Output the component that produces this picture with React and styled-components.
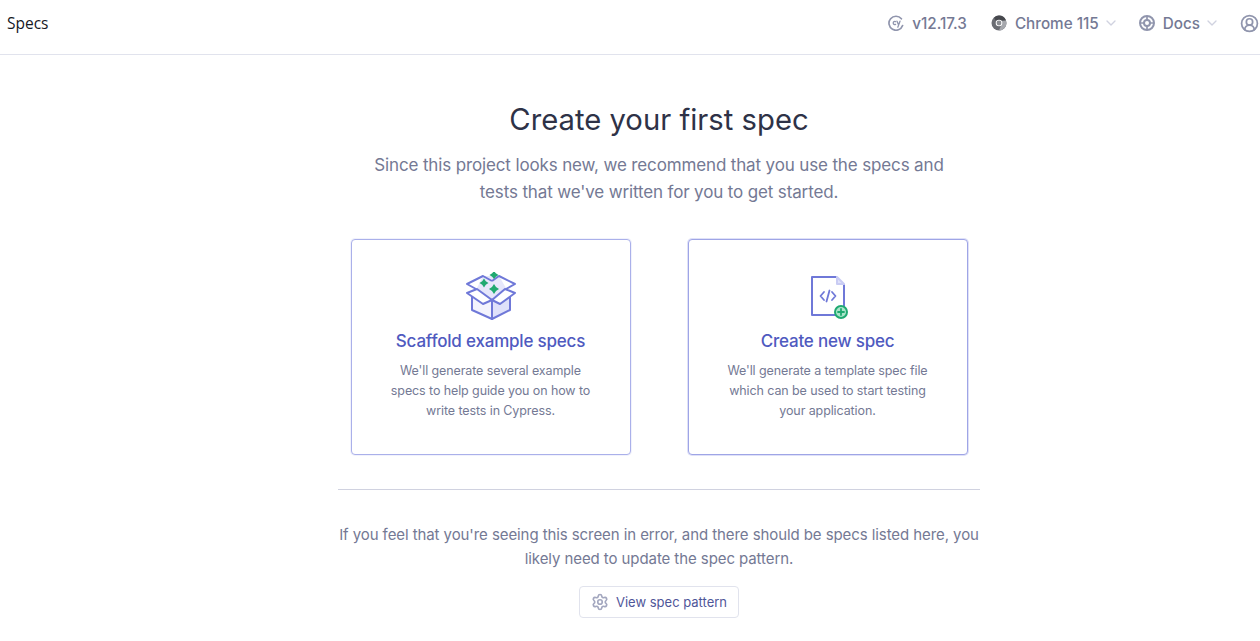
import styled, { createGlobalStyle } from 'styled-components';
import { ChevronDown, CircleUserRound, Settings } from 'lucide-react';

const GlobalStyle = createGlobalStyle`
  html, body {
    margin: 0;
    background: #fff;
    font-family: 'Inter', 'Liberation Sans', sans-serif;
  }
  * {
    box-sizing: border-box;
  }
`;

const Page = styled.div`
  width: 1260px;
  height: 641px;
  overflow: hidden;
`;

const TopBar = styled.header`
  height: 55px;
  border-bottom: 1px solid #e1e3ed;
  display: flex;
  align-items: center;
  justify-content: space-between;
  padding: 0 1px 8px 7px;
`;

const Crumb = styled.div`
  font-family: 'Open Sans', sans-serif;
  font-size: 15.5px;
  color: #16181f;
`;

const TopActions = styled.div`
  display: flex;
  align-items: center;
  gap: 20px;
`;

const TopItem = styled.div`
  display: flex;
  align-items: center;
  gap: 8px;
  margin-right: ${(p) => p.$mr || 0}px;
  font-size: 15.25px;
  font-weight: 500;
  color: #747994;
  svg {
    flex: none;
  }
`;

const Caret = styled(ChevronDown)`
  color: #d0d2e0;
  margin-left: -4px;
`;

const UserIcon = styled(CircleUserRound)`
  color: #9095ad;
  flex: none;
`;

// the content column is centred on a page slightly wider than the window
const Main = styled.main`
  display: flex;
  flex-direction: column;
  align-items: center;
  padding-left: 58px;
`;

const Title = styled.h1`
  margin: 45px 0 0;
  font-size: 29.25px;
  line-height: 40px;
  font-weight: 400;
  color: #2e3247;
`;

const Lead = styled.p`
  margin: 12px 0 0;
  width: 590px;
  text-align: center;
  font-size: 17px;
  letter-spacing: -0.14px;
  line-height: 27px;
  color: #747994;
`;

const Cards = styled.div`
  margin-top: 33px;
  display: flex;
  gap: 57px;
`;

const Card = styled.button`
  width: 280px;
  height: 216px;
  padding: 32px 0 0;
  background: #fff;
  border: 1px solid ${(p) => (p.$active ? '#9fa5e6' : '#aab0ea')};
  border-radius: 4px;
  box-shadow: ${(p) => (p.$active ? '0 0 0 1px #dfe1f8' : '0 0 0 1px #f1f2fc')};
  display: flex;
  flex-direction: column;
  align-items: center;
  font-family: inherit;
`;

const IconSlot = styled.div`
  height: 48px;
  display: flex;
  align-items: center;
  justify-content: center;
`;

const CardTitle = styled.div`
  margin-top: 7px;
  font-size: 17px;
  letter-spacing: -0.2px;
  line-height: 28px;
  font-weight: 500;
  color: #4f5abf;
`;

const CardText = styled.div`
  margin-top: 6px;
  width: 208px;
  font-size: 12.5px;
  letter-spacing: -0.1px;
  line-height: 20px;
  color: #747994;
`;

const Divider = styled.hr`
  width: 642px;
  margin: 34px 0 0;
  border: 0;
  border-top: 1px solid #d0d2e0;
`;

const Note = styled.p`
  margin: 33px 0 0;
  width: 650px;
  text-align: center;
  font-size: 15px;
  letter-spacing: -0.08px;
  line-height: 24px;
  color: #747994;
`;

const PatternButton = styled.button`
  margin-top: 15px;
  width: 160px;
  height: 32px;
  display: flex;
  align-items: center;
  justify-content: center;
  gap: 7px;
  background: #fff;
  border: 1px solid #e1e3ed;
  border-radius: 4px;
  font-family: inherit;
  font-size: 13px;
  color: #4f5699;
  svg {
    color: #a3a7bf;
  }
`;

const CypressIcon = () => (
  <svg width="16" height="16" viewBox="0 0 16 16" fill="none" stroke="#9095ad" strokeWidth="1.7" strokeLinecap="round">
    <path d="M13.4 3.8A7 7 0 1 0 14.6 10.5" />
    <path d="M7.6 6.6a1.6 1.6 0 1 0 0 2.8" strokeWidth="1.3" />
    <path d="M9 6.2l1.5 3.6M12 6.2l-2.2 6" strokeWidth="1.3" />
  </svg>
);

const ChromeIcon = () => (
  <svg width="16" height="16" viewBox="0 0 16 16">
    <circle cx="8" cy="8" r="7.5" fill="#6b6d73" />
    <path d="M8 .5A7.5 7.5 0 0 1 15 5.500H8A2.600 2.600 0 0 0 5.600 7L3 2.700A7.500 7.500 0 0 1 8 .5Z" fill="#46484d" />
    <path d="M15 5.500A7.500 7.500 0 0 1 8 15.500L10.400 9.400A2.600 2.600 0 0 0 10.200 6Z" fill="#a6a8ad" />
    <circle cx="8" cy="8" r="3.300" fill="#fff" />
    <circle cx="8" cy="8" r="2.400" fill="#8b8d92" />
  </svg>
);

const DocsIcon = () => (
  <svg width="16" height="16" viewBox="0 0 16 16" fill="none" stroke="#9095ad" strokeWidth="2">
    <circle cx="8" cy="8" r="7" />
    <circle cx="8" cy="8" r="3" />
    <path d="M8 1V5M8 11V15M1 8H5M11 8H15" strokeWidth="1.700" />
  </svg>
);

const BoxIcon = () => (
  <svg width="50" height="48" viewBox="26 12 50 48" fill="none" stroke="#6f78d8" strokeWidth="2" strokeLinejoin="round">
    <path d="M37 28L43 16L59 16L66 28L52 40Z" fill="#e6e7fb" stroke="none" />
    <path d="M32 34V50L52 59V40Z" fill="#f3f3fd" />
    <path d="M70 34V50L52 59V40Z" fill="#dfe1fa" />
    <path d="M36 29L27 24L43 16L52 21" />
    <path d="M66 29L75 24L59 16L52 21" />
    <path d="M37 29L27 33L43 44L52 40Z" fill="#fff" />
    <path d="M65 29L75 33L60 44L52 40Z" fill="#fff" />
    <g fill="#1fa971" stroke="none">
      <path d="M54 11L55.800 13.200L58.500 15L55.800 16.800L54 19L52.200 16.800L49.500 15L52.200 13.200Z" />
      <path d="M44 18.500L45.800 21.200L48.500 23L45.800 24.800L44 27.500L42.200 24.800L39.500 23L42.200 21.200Z" />
      <path d="M54 24L56 27L59 29L56 31L54 34L52 31L49 29L52 27Z" />
    </g>
  </svg>
);

const FileIcon = () => (
  <svg width="42" height="48" viewBox="17 7 42 48" fill="none" stroke="#6f78d8" strokeWidth="2" strokeLinejoin="round" strokeLinecap="round">
    <path d="M46 12H22V50H46" />
    <path d="M54 20V41" />
    <path d="M47 12L54 19H47Z" fill="#dfe1fa" stroke="#c9ccf3" />
    <path d="M34 27L30.500 31L34 35M42 27L45.500 31L42 35M39.500 25.500L36.500 36.500" strokeWidth="1.800" />
    <circle cx="51" cy="47" r="6" fill="#a9e5c9" stroke="#1fa971" strokeWidth="2" />
    <path d="M51 44V50M48 47H54" stroke="#1fa971" strokeWidth="1.800" />
  </svg>
);

export default function App() {
  return (
    <Page>
      <GlobalStyle />
      <TopBar>
        <Crumb>Specs</Crumb>
        <TopActions>
          <TopItem $mr={4}>
            <CypressIcon />
            v12.17.3
          </TopItem>
          <TopItem>
            <ChromeIcon />
            Chrome 115
            <Caret size={16} />
          </TopItem>
          <TopItem>
            <DocsIcon />
            Docs
            <Caret size={16} />
          </TopItem>
          <UserIcon size={19} strokeWidth={2.200} />
        </TopActions>
      </TopBar>
      <Main>
        <Title>Create your first spec</Title>
        <Lead>
          Since this project looks new, we recommend that you use the specs and tests that we've written for you to get started.
        </Lead>
        <Cards>
          <Card>
            <IconSlot>
              <BoxIcon />
            </IconSlot>
            <CardTitle>Scaffold example specs</CardTitle>
            <CardText>We'll generate several example specs to help guide you on how to write tests in Cypress.</CardText>
          </Card>
          <Card $active>
            <IconSlot>
              <FileIcon />
            </IconSlot>
            <CardTitle>Create new spec</CardTitle>
            <CardText>We'll generate a template spec file which can be used to start testing your application.</CardText>
          </Card>
        </Cards>
        <Divider />
        <Note>
          If you feel that you're seeing this screen in error, and there should be specs listed here, you likely need to update the spec pattern.
        </Note>
        <PatternButton>
          <Settings size={18} strokeWidth={2.200} />
          View spec pattern
        </PatternButton>
      </Main>
    </Page>
  );
}
